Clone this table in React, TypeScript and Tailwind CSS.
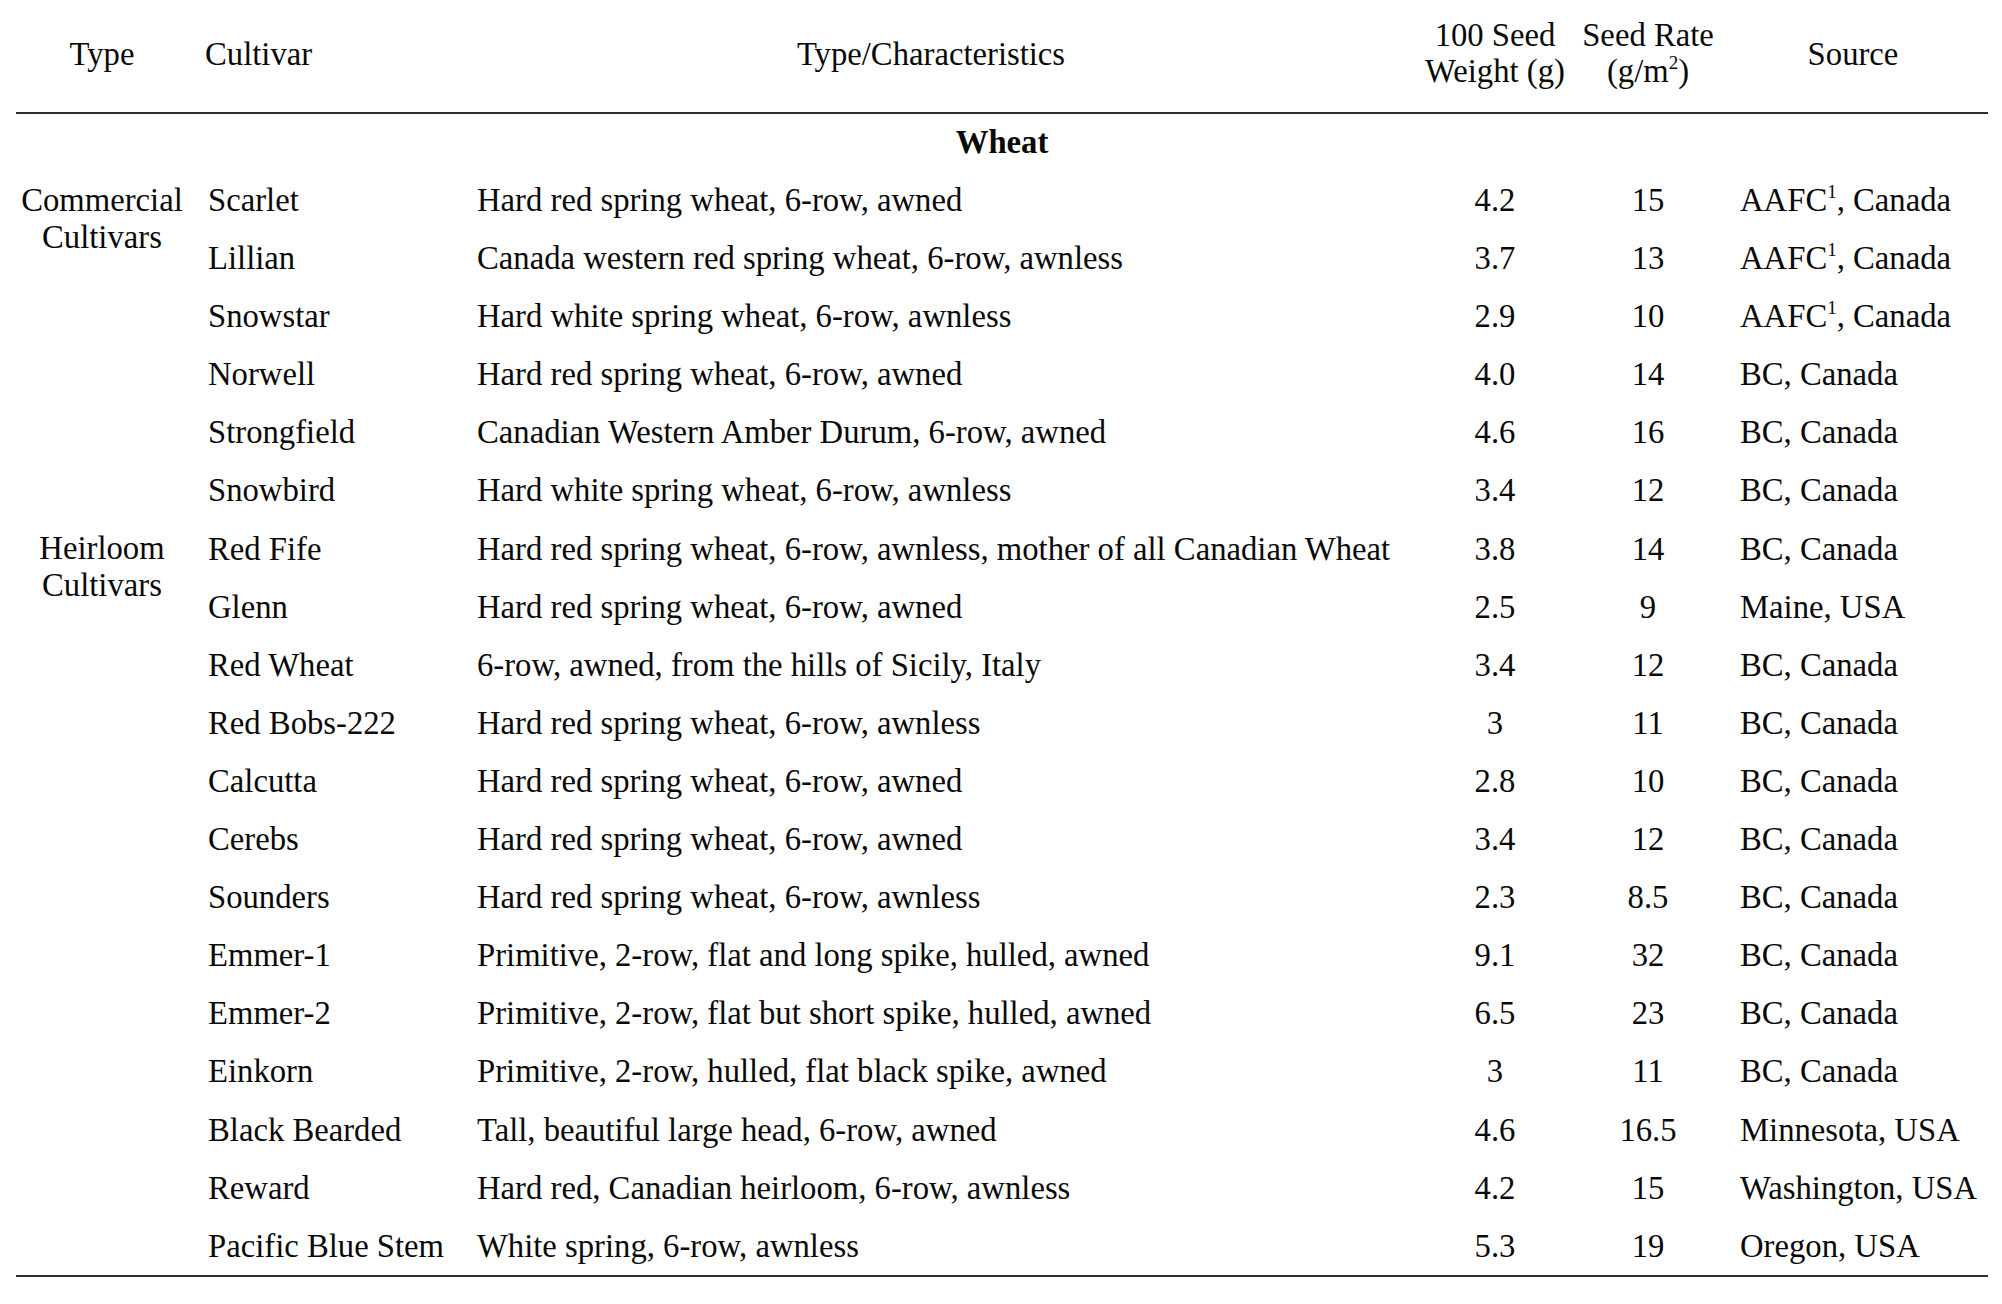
const rows = [
  { cultivar: "Scarlet", info: "Hard red spring wheat, 6-row, awned", weight: "4.2", rate: "15", source: "AAFC", note: true, place: ", Canada" },
  { cultivar: "Lillian", info: "Canada western red spring wheat, 6-row, awnless", weight: "3.7", rate: "13", source: "AAFC", note: true, place: ", Canada" },
  { cultivar: "Snowstar", info: "Hard white spring wheat, 6-row, awnless", weight: "2.9", rate: "10", source: "AAFC", note: true, place: ", Canada" },
  { cultivar: "Norwell", info: "Hard red spring wheat, 6-row, awned", weight: "4.0", rate: "14", source: "BC, Canada" },
  { cultivar: "Strongfield", info: "Canadian Western Amber Durum, 6-row, awned", weight: "4.6", rate: "16", source: "BC, Canada" },
  { cultivar: "Snowbird", info: "Hard white spring wheat, 6-row, awnless", weight: "3.4", rate: "12", source: "BC, Canada" },
  { cultivar: "Red Fife", info: "Hard red spring wheat, 6-row, awnless, mother of all Canadian Wheat", weight: "3.8", rate: "14", source: "BC, Canada" },
  { cultivar: "Glenn", info: "Hard red spring wheat, 6-row, awned", weight: "2.5", rate: "9", source: "Maine, USA" },
  { cultivar: "Red Wheat", info: "6-row, awned, from the hills of Sicily, Italy", weight: "3.4", rate: "12", source: "BC, Canada" },
  { cultivar: "Red Bobs-222", info: "Hard red spring wheat, 6-row, awnless", weight: "3", rate: "11", source: "BC, Canada" },
  { cultivar: "Calcutta", info: "Hard red spring wheat, 6-row, awned", weight: "2.8", rate: "10", source: "BC, Canada" },
  { cultivar: "Cerebs", info: "Hard red spring wheat, 6-row, awned", weight: "3.4", rate: "12", source: "BC, Canada" },
  { cultivar: "Sounders", info: "Hard red spring wheat, 6-row, awnless", weight: "2.3", rate: "8.5", source: "BC, Canada" },
  { cultivar: "Emmer-1", info: "Primitive, 2-row, flat and long spike, hulled, awned", weight: "9.1", rate: "32", source: "BC, Canada" },
  { cultivar: "Emmer-2", info: "Primitive, 2-row, flat but short spike, hulled, awned", weight: "6.5", rate: "23", source: "BC, Canada" },
  { cultivar: "Einkorn", info: "Primitive, 2-row, hulled, flat black spike, awned", weight: "3", rate: "11", source: "BC, Canada" },
  { cultivar: "Black Bearded", info: "Tall, beautiful large head, 6-row, awned", weight: "4.6", rate: "16.5", source: "Minnesota, USA" },
  { cultivar: "Reward", info: "Hard red, Canadian heirloom, 6-row, awnless", weight: "4.2", rate: "15", source: "Washington, USA" },
  { cultivar: "Pacific Blue Stem", info: "White spring, 6-row, awnless", weight: "5.3", rate: "19", source: "Oregon, USA" },
]

const cols = "grid grid-cols-[172px_278px_930px_198px_108px_286px]"

export default function App() {
  return (
    <div className="w-[2002px] h-[1304px] bg-white text-[#0a0a0a] text-[32.7px] font-['Liberation_Serif','Times_New_Roman',serif]">
      <div className="ml-[16px] w-[1972px] pt-[17px]">
        {/* header */}
        <div className={`${cols} items-center leading-[36px]`}>
          <div className="text-center pt-[1px]">Type</div>
          <div className="pl-[17px] pt-[1px]">Cultivar</div>
          <div className="text-center pt-[1px]">Type/Characteristics</div>
          <div className="flex flex-col items-center whitespace-nowrap">
            <span>100 Seed</span>
            <span>Weight (g)</span>
          </div>
          <div className="flex flex-col items-center whitespace-nowrap">
            <span>Seed Rate</span>
            <span>
              (g/m<sup className="text-[19px] top-[-13px]">2</sup>)
            </span>
          </div>
          <div className="text-center pl-[16px] pt-[1px]">Source</div>
        </div>

        <div className="mt-[23px] h-[2px] bg-[#2e2e2e]" />

        <div className="mt-[10px] text-center font-bold leading-[36px]">Wheat</div>

        {/* body */}
        <div className={`${cols} grid-rows-[repeat(19,58.1px)] mt-[11px] leading-[58.1px]`}>
          <div className="row-span-6 col-start-1 row-start-1 text-center leading-[37px] pt-[10.5px]">
            Commercial
            <br />
            Cultivars
          </div>
          <div className="row-span-13 col-start-1 row-start-7 text-center leading-[37px] pt-[10.5px]">
            Heirloom
            <br />
            Cultivars
          </div>
          {rows.map((r, i) => (
            <div key={i} className="contents">
              <div className="col-start-2 pl-[20px] whitespace-nowrap">{r.cultivar}</div>
              <div className="col-start-3 pl-[11px] whitespace-nowrap">{r.info}</div>
              <div className="col-start-4 text-center">{r.weight}</div>
              <div className="col-start-5 text-center">{r.rate}</div>
              <div className="col-start-6 pl-[38px] whitespace-nowrap">
                {r.source}
                {r.note && <sup className="text-[19px] top-[-13px]">1</sup>}
                {r.place}
              </div>
            </div>
          ))}
        </div>

        <div className="h-[2px] bg-[#2e2e2e]" />
      </div>
    </div>
  )
}
